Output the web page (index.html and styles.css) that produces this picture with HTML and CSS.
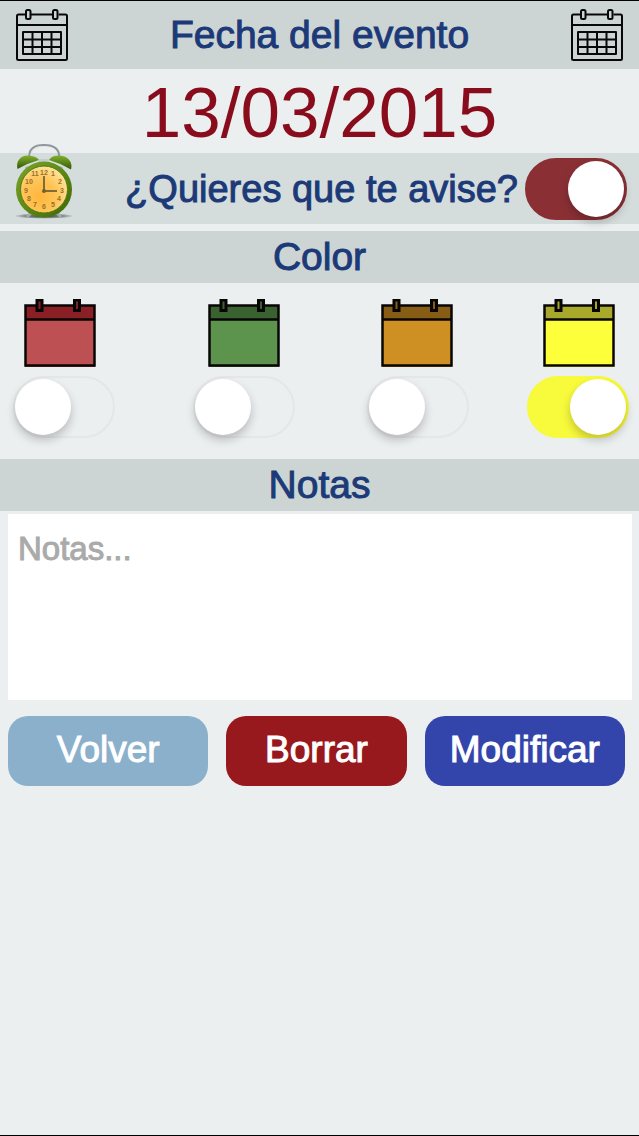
FILE: index.html
```html
<!DOCTYPE html>
<html lang="es">
<head>
<meta charset="utf-8">
<meta name="viewport" content="width=device-width, initial-scale=1">
<title>Fecha del evento</title>
<link rel="stylesheet" href="styles.css">
</head>
<body>
<svg class="defs" aria-hidden="true">
  <symbol id="calendar" viewBox="0 0 52 52">
    <g fill="none" stroke="#080808" stroke-width="2" stroke-linejoin="round">
      <path d="M9.500 5.500H2.500Q1 5.500 1 7V49.500Q1 51 2.500 51H49.500Q51 51 51 49.500V7Q51 5.500 49.500 5.500H42.500M14.500 5.500H37.500M1 16H51"/>
      <rect x="10" y="1" width="4.500" height="9" rx="1.500"/>
      <rect x="37" y="1" width="4.500" height="9" rx="1.500"/>
      <path d="M7 23H45V45H7ZM7 30.500H45M7 38H45M16.500 23V45M26 23V45M35.500 23V45"/>
    </g>
  </symbol>
  <symbol id="swatch" viewBox="0 0 72 69">
    <rect x="1" y="7" width="70" height="61" fill="currentColor"/>
    <rect class="band" x="1" y="7" width="70" height="14"/>
    <path d="M1.500 6.500H70.500V66.500H1.500ZM1.500 20.500H70.500" fill="none" stroke="#080604" stroke-width="2.500"/>
    <g stroke="#080604" stroke-width="3">
      <rect class="band" x="13" y="1" width="5" height="10.500"/>
      <rect class="band" x="50.500" y="1" width="5" height="10.500"/>
    </g>
  </symbol>
</svg>

<main class="screen">
  <header class="bar bar-top">
    <svg class="calendar" aria-hidden="true"><use href="#calendar"/></svg>
    <h1 class="title">Fecha del evento</h1>
    <svg class="calendar" aria-hidden="true"><use href="#calendar"/></svg>
  </header>

  <time class="date" datetime="2015-03-13">13/03/2015</time>

  <div class="alert">
    <svg class="clock" viewBox="0 0 60 76" aria-hidden="true">
      <defs>
        <radialGradient id="face" cx=".4" cy=".65" r=".7">
          <stop offset="0" stop-color="#ffb63c"/>
          <stop offset=".55" stop-color="#ffc65a"/>
          <stop offset="1" stop-color="#ffe6a0"/>
        </radialGradient>
        <linearGradient id="ring" x1="0" y1="0" x2="1" y2="1">
          <stop offset="0" stop-color="#7ba52c"/>
          <stop offset=".5" stop-color="#5c8a14"/>
          <stop offset="1" stop-color="#3d6608"/>
        </linearGradient>
        <linearGradient id="bell" x1="0" y1="0" x2="0" y2="1">
          <stop offset="0" stop-color="#83b02d"/>
          <stop offset="1" stop-color="#2f5a06"/>
        </linearGradient>
        <radialGradient id="shade">
          <stop offset="0" stop-color="#343c3a"/>
          <stop offset=".6" stop-color="#5a6462" stop-opacity=".75"/>
          <stop offset="1" stop-color="#5a6462" stop-opacity="0"/>
        </radialGradient>
      </defs>
      <ellipse cx="30" cy="73" rx="30" ry="2.800" fill="url(#shade)"/>
      <path d="M17 70l-4 4M43 70l4 4M12 24l5 6M48 24l-5 6" stroke="#a4abad" stroke-width="3"/>
      <path d="M15.500 16C14 6 20 2 30 2s16 4 15 13" fill="none" stroke="#8e979b" stroke-width="2"/>
      <path d="M17 12C18 5 23 3.500 30 3.500" fill="none" stroke="#dce1e2"/>
      <path d="M25 16h10v5H25z" fill="#c5cccc"/>
      <path d="M3.500 26C1.500 18 7 12 14 12.500c5 .300 9 1.500 11 4.500Q14 20 3.500 26z" fill="url(#bell)"/>
      <path d="M57 26.500c2.500-8-4-13.500-11-14-5-.300-9 1-11 4.500Q46 20 57 26.500z" fill="url(#bell)"/>
      <ellipse cx="30" cy="46.500" rx="28" ry="28" fill="url(#ring)"/>
      <circle cx="30" cy="46.500" r="23.500" fill="url(#face)" stroke="#507a12"/>
      <g class="numerals">
        <text x="30" y="32">12</text><text x="39" y="33">1</text><text x="46" y="41">2</text>
        <text x="48" y="50">3</text><text x="45" y="58">4</text><text x="39" y="64">5</text>
        <text x="30" y="66">6</text><text x="21" y="64">7</text><text x="15" y="58">8</text>
        <text x="12" y="50">9</text><text x="15" y="41">10</text><text x="21" y="33">11</text>
      </g>
      <path d="M30 48V33M30 48H43" stroke="#59502c" stroke-width="1.500"/>
      <circle cx="30" cy="48" r="2" fill="#6d6331"/>
    </svg>
    <label class="title alert-label" for="notify">¿Quieres que te avise?</label>
    <input class="switch switch-red" type="checkbox" role="switch" id="notify" checked>
  </div>

  <h2 class="bar title">Color</h2>

  <div class="colors">
    <div class="swatches">
      <label for="red"><svg class="swatch red" role="img" aria-label="Rojo"><use href="#swatch"/></svg></label>
      <label for="green"><svg class="swatch green" role="img" aria-label="Verde"><use href="#swatch"/></svg></label>
      <label for="orange"><svg class="swatch orange" role="img" aria-label="Naranja"><use href="#swatch"/></svg></label>
      <label for="yellow"><svg class="swatch yellow" role="img" aria-label="Amarillo"><use href="#swatch"/></svg></label>
    </div>
    <div class="switches">
      <input class="switch" type="checkbox" role="switch" id="red">
      <input class="switch" type="checkbox" role="switch" id="green">
      <input class="switch" type="checkbox" role="switch" id="orange">
      <input class="switch switch-yellow" type="checkbox" role="switch" id="yellow" checked>
    </div>
  </div>

  <h2 class="bar title">Notas</h2>
  <textarea class="notes" placeholder="Notas..." aria-label="Notas"></textarea>

  <div class="actions">
    <button class="button back" type="button">Volver</button>
    <button class="button delete" type="button">Borrar</button>
    <button class="button save" type="button">Modificar</button>
  </div>
</main>
</body>
</html>
```

FILE: styles.css
```css
* {
  box-sizing: border-box;
}

body {
  margin: 0;
  background: #eceff0;
  font-family: "Liberation Sans", Arial, sans-serif;
}

.defs {
  display: none;
}

.screen {
  display: flex;
  flex-direction: column;
  min-height: 100vh;
  border-top: 1px solid #000;
  border-bottom: 1px solid #000;
}

.title {
  margin: 0;
  color: #1c3a78;
  font-size: 39px;
  font-weight: 400;
  line-height: 52px;
  text-align: center;
  -webkit-text-stroke: 1px currentColor;
}

.bar {
  background: #cdd5d4;
}

.bar-top {
  display: flex;
  align-items: center;
  justify-content: space-between;
  padding: 8px 16px;
}

.calendar {
  width: 52px;
  height: 52px;
}

.date {
  padding-top: 4px;
  color: #880c1c;
  font-size: 71px;
  line-height: 80px;
  text-align: center;
}

.alert {
  display: flex;
  align-items: center;
  margin-bottom: 7px;
  padding: 0 12px 0 14px;
  background: #d5dddc;
}

.clock {
  flex: none;
  width: 60px;
  height: 76px;
  margin: -10px 0 5px;
}

.numerals {
  fill: #98702c;
  font-size: 7px;
  font-weight: 700;
  text-anchor: middle;
}

.alert-label {
  flex: 1;
  padding-right: 7px;
  font-size: 38px;
  text-align: right;
}

.switch {
  display: flex;
  flex: none;
  width: 102px;
  height: 62px;
  margin: 0;
  padding: 1px 0;
  appearance: none;
  border: 2px solid #e4e6e8;
  border-radius: 31px;
}

.switch::before {
  width: 56px;
  height: 56px;
  border-radius: 50%;
  background: #fff;
  box-shadow: 0 5px 10px rgb(0 0 0 / 22%);
  content: "";
}

.switch:checked {
  justify-content: flex-end;
  padding-right: 1px;
}

.switch-red:checked {
  border-color: #8a3035;
  background: #8a3035;
}

.switch-yellow:checked {
  border-color: #f8fa3c;
  background: #f8fa3c;
}

.colors {
  padding: 16px 0 21px;
}

.swatches {
  display: grid;
  grid-template-columns: 184fr 173fr 162fr 72fr;
  padding: 0 24px 8px;
}

.switches {
  display: grid;
  grid-template-columns: 180fr 174fr 160fr 102fr;
  padding: 0 10px 0 13px;
}

.swatch {
  display: block;
  width: 72px;
  height: 69px;
}

.band {
  fill: var(--band);
}

.red {
  --band: #8a2026;
  color: #bc5053;
}

.green {
  --band: #3a6230;
  color: #5c944e;
}

.orange {
  --band: #875c14;
  color: #ce9022;
}

.yellow {
  --band: #a8a82a;
  color: #fdff3b;
}

.notes {
  height: 186px;
  margin: 3px 7px 16px 8px;
  padding: 15px 10px;
  border: 0;
  resize: none;
  background: #fff;
  color: #333;
  font: 33px/40px "Liberation Sans", Arial, sans-serif;
}

.notes::placeholder {
  color: #aaa;
  -webkit-text-stroke: 1px #aaa;
}

.actions {
  display: grid;
  grid-template-columns: 200fr 180fr 200fr;
  gap: 18px;
  padding: 0 14px 0 8px;
}

.button {
  height: 70px;
  padding: 0 0 2px;
  border: 0;
  border-radius: 20px;
  color: #fff;
  font: 37px/40px "Liberation Sans", Arial, sans-serif;
  -webkit-text-stroke: 1px #fff;
}

.back {
  background: #8ab0cc;
}

.delete {
  background: #98191d;
}

.save {
  background: #3345aa;
}
```
